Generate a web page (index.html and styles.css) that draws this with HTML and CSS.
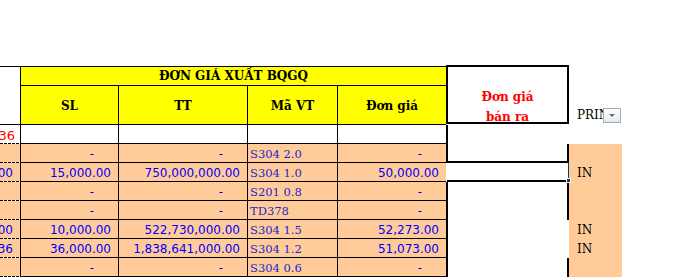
FILE: index.html
```html
<!DOCTYPE html>
<html lang="vi">
<head>
<meta charset="utf-8">
<title>Đơn giá xuất BQGQ</title>
<link rel="stylesheet" href="styles.css">
</head>
<body>
<div class="sheet">
  <div class="cell a-head"></div>
  <div class="cell title">ĐƠN GIÁ XUẤT BQGQ</div>
  <div class="cell sale-head"><span>Đơn giá</span><span>bán ra</span></div>
  <div class="cell filter-head"><span class="filter-text">PRIN</span><span class="filter-btn"><span class="tri"></span></span></div>
  <div class="cell hd">SL</div>
  <div class="cell hd">TT</div>
  <div class="cell hd">Mã VT</div>
  <div class="cell hd last">Đơn giá</div>

  <div class="cell a3">36</div>
  <div class="cell w"></div>
  <div class="cell w"></div>
  <div class="cell w"></div>
  <div class="cell w last"></div>
  <div class="cell f3"></div>
  <div class="cell g3"></div>

  <div class="cell a"></div>
  <div class="cell n dash">-</div>
  <div class="cell n dash">-</div>
  <div class="cell code">S304 2.0</div>
  <div class="cell n e dash">-</div>
  <div class="cell f"></div>
  <div class="cell g"></div>

  <div class="cell a n">00</div>
  <div class="cell n">15,000.00</div>
  <div class="cell n">750,000,000.00</div>
  <div class="cell code">S304 1.0</div>
  <div class="cell n e">50,000.00</div>
  <div class="cell f selected"><span class="sel"></span><span class="sel-edge"></span><span class="sel-handle"></span></div>
  <div class="cell g">IN</div>

  <div class="cell a"></div>
  <div class="cell n dash">-</div>
  <div class="cell n dash">-</div>
  <div class="cell code">S201 0.8</div>
  <div class="cell n e dash">-</div>
  <div class="cell f"></div>
  <div class="cell g"></div>

  <div class="cell a"></div>
  <div class="cell n dash">-</div>
  <div class="cell n dash">-</div>
  <div class="cell code">TD378</div>
  <div class="cell n e dash">-</div>
  <div class="cell f"></div>
  <div class="cell g"></div>

  <div class="cell a n">00</div>
  <div class="cell n">10,000.00</div>
  <div class="cell n">522,730,000.00</div>
  <div class="cell code">S304 1.5</div>
  <div class="cell n e">52,273.00</div>
  <div class="cell f nr"></div>
  <div class="cell g">IN</div>

  <div class="cell a n">36</div>
  <div class="cell n">36,000.00</div>
  <div class="cell n">1,838,641,000.00</div>
  <div class="cell code">S304 1.2</div>
  <div class="cell n e">51,073.00</div>
  <div class="cell f nr"></div>
  <div class="cell g">IN</div>

  <div class="cell a"></div>
  <div class="cell n dash">-</div>
  <div class="cell n dash">-</div>
  <div class="cell code">S304 0.6</div>
  <div class="cell n e dash">-</div>
  <div class="cell f"></div>
  <div class="cell g"></div>
</div>
</body>
</html>
```

FILE: styles.css
```css
* {
  box-sizing: border-box;
  margin: 0;
  padding: 0;
}

html,
body {
  background: #ffffff;
}

body {
  width: 675px;
  height: 277px;
  overflow: hidden;
  padding-top: 66px;
}

.sheet {
  display: grid;
  grid-template-columns: 21px 98px 129px 90px 108px 123px 53px;
  grid-template-rows: 20px 39px 19px repeat(7, 19px);
  font-family: "DejaVu Sans", sans-serif;
  font-size: 12px;
  color: #0000ff;
}

.cell {
  min-width: 0;
  white-space: nowrap;
}

/* ---------- header ---------- */
.a-head {
  grid-row: span 2;
  border-top: 1px solid #000;
  border-right: 1px solid #000;
  border-bottom: 1px solid #000;
}

.title {
  grid-column: span 4;
  background: #ffff00;
  border-top: 1px solid #000;
  border-bottom: 1px solid #000;
  color: #000;
  font: bold 12px/18px "DejaVu Serif", serif;
  text-align: center;
}

.sale-head {
  grid-row: span 2;
  margin: -1px 0 1px;
  border: 2px solid #000;
  padding-top: 20px;
  color: #ff0000;
  font: bold 12px/20px "DejaVu Serif", serif;
  text-align: center;
  display: flex;
  flex-direction: column;
  align-items: center;
}

.filter-head {
  grid-row: span 2;
  position: relative;
  display: flex;
  align-items: flex-end;
  padding: 0 0 1px 8px;
  color: #000;
  font: 12px/18px "DejaVu Serif", serif;
  overflow: hidden;
}

.filter-btn {
  position: absolute;
  left: 34px;
  top: 42px;
  width: 18px;
  height: 15px;
  border: 1px solid #a3abb6;
  background: linear-gradient(#ffffff, #e4e8ee);
  display: flex;
  align-items: center;
  justify-content: center;
}

.tri {
  width: 0;
  height: 0;
  border-left: 3px solid transparent;
  border-right: 3px solid transparent;
  border-top: 3px solid #6a6a6a;
}

.hd {
  background: #ffff00;
  border-right: 1px solid #000;
  border-bottom: 1px solid #000;
  color: #000;
  font: bold 12px/36px "DejaVu Serif", serif;
  text-align: center;
  padding-top: 2px;
}

.hd.last {
  border-right: none;
}

/* ---------- white row ---------- */
.a3 {
  border-right: 1px solid #000;
  background: repeating-linear-gradient(to right, #000 0 3px, #fff 3px 4px) left bottom / 100% 1px no-repeat, #ffffff;
  color: #ff0000;
  font-size: 13px;
  line-height: 18px;
  padding: 2px 5px 0 0;
  display: flex;
  justify-content: flex-end;
}

.w {
  border-right: 1px solid #000;
  border-bottom: 1px solid #000;
}

.w.last {
  border-right: none;
}

.f3 {
  border-left: 2px solid #000;
}

/* ---------- data rows ---------- */
.a {
  border-right: 1px solid #000;
  background: repeating-linear-gradient(to right, #000 0 3px, #fff 3px 4px) left bottom / 100% 1px no-repeat, #ffcc99;
}

.n {
  display: flex;
  justify-content: flex-end;
  line-height: 18px;
  padding: 1px 7px 0 0;
}

.n:not(.a) {
  background: #ffcc99;
  border-right: 1px solid #000;
  border-bottom: 1px solid #000;
}

.n.e {
  border-right: none;
}

.n.dash {
  padding-right: 24px;
}

.code {
  background: #ffcc99;
  border-right: 1px solid #000;
  border-bottom: 1px solid #000;
  color: #2424d0;
  font: 11.5px/18px "DejaVu Serif", serif;
  padding: 1px 0 0 2px;
}

.f {
  background: #ffffff;
  border-left: 2px solid #000;
  border-right: 2px solid #000;
}

.f.nr {
  border-right-color: transparent;
}

.f.selected {
  position: relative;
  border-left-color: #ffffff;
  border-right-color: transparent;
}

.sel {
  position: absolute;
  z-index: 2;
  left: -1px;
  top: -2px;
  width: 121px;
  height: 21px;
  border-top: 2px solid #000;
  border-bottom: 2px solid #000;
}

.sel-edge {
  position: absolute;
  z-index: 2;
  left: 120px;
  top: -1px;
  width: 1px;
  height: 19px;
  background: #1d3557;
}

.sel-handle {
  position: absolute;
  z-index: 3;
  left: 118px;
  top: 15px;
  width: 5px;
  height: 5px;
  border: 1px solid #ffffff;
  background: #1d3557;
}

.g {
  background: #ffcc99;
  color: #000;
  font: 12px/18px "DejaVu Serif", serif;
  padding: 1px 0 0 8px;
}
```
